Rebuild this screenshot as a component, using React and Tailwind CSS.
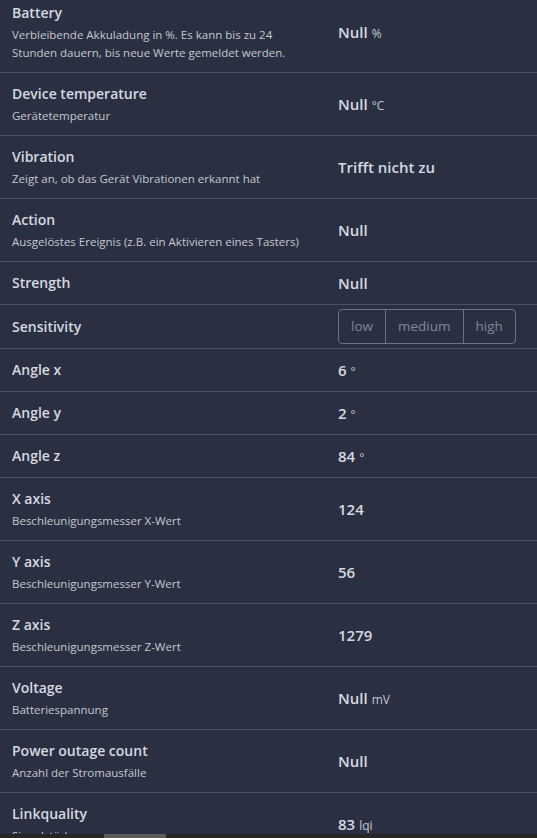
const ROWS = [
  { name: 'Battery', desc: 'Verbleibende Akkuladung in %. Es kann bis zu 24 Stunden dauern, bis neue Werte gemeldet werden.', value: 'Null', unit: '%' },
  { name: 'Device temperature', desc: 'Gerätetemperatur', value: 'Null', unit: '°C' },
  { name: 'Vibration', desc: 'Zeigt an, ob das Gerät Vibrationen erkannt hat', value: 'Trifft nicht zu' },
  { name: 'Action', desc: 'Ausgelöstes Ereignis (z.B. ein Aktivieren eines Tasters)', value: 'Null' },
  { name: 'Strength', value: 'Null' },
  { name: 'Sensitivity', options: ['low', 'medium', 'high'] },
  { name: 'Angle x', value: '6', unit: '°' },
  { name: 'Angle y', value: '2', unit: '°' },
  { name: 'Angle z', value: '84', unit: '°' },
  { name: 'X axis', desc: 'Beschleunigungsmesser X-Wert', value: '124' },
  { name: 'Y axis', desc: 'Beschleunigungsmesser Y-Wert', value: '56' },
  { name: 'Z axis', desc: 'Beschleunigungsmesser Z-Wert', value: '1279' },
  { name: 'Voltage', desc: 'Batteriespannung', value: 'Null', unit: 'mV' },
  { name: 'Power outage count', desc: 'Anzahl der Stromausfälle', value: 'Null' },
  { name: 'Linkquality', desc: 'Signalstärke', value: '83', unit: 'lqi' },
];

function Row({ row }) {
  return (
    <div className="grid grid-cols-[326px_1fr] items-center px-3 py-[10px] border-b border-[#4b5161]">
      <div className="pr-[36px]">
        <div className="text-[14px] leading-[22px] font-semibold text-[#d5d9e0]">{row.name}</div>
        {row.desc && (
          <div className="mt-[2px] text-[11.5px] leading-[18px] text-[#c4c8cf]">{row.desc}</div>
        )}
      </div>
      <div>
        {row.options ? (
          <div className="-my-[6px] flex h-[35px] w-fit rounded-[4px] border border-[#6b7282]">
            {row.options.map((o, i) => (
              <span
                key={o}
                className={`flex items-center px-3 text-[13.5px] text-[#7e8796] ${i > 0 ? 'border-l border-[#6b7282]' : ''}`}
              >
                {o}
              </span>
            ))}
          </div>
        ) : (
          <div className="flex h-[22px] items-baseline gap-1 leading-[22px]">
            <span className="text-[15px] font-semibold text-[#d5d9e0]">{row.value}</span>
            {row.unit && <span className="text-[12px] text-[#c4c8cf]">{row.unit}</span>}
          </div>
        )}
      </div>
    </div>
  );
}

export default function App() {
  return (
    <div className="flex h-[838px] flex-col bg-[#2a3042]" style={{ fontFamily: '"Open Sans", "Noto Sans", sans-serif' }}>
      <div className="flex-1 overflow-hidden">
        <div className="-mt-[8px]">
          {ROWS.map((r) => (
            <Row key={r.name} row={r} />
          ))}
        </div>
      </div>
      {/* horizontal scrollbar */}
      <div className="h-[4px] bg-[#262626]">
        <div className="ml-[104px] h-full w-[62px] bg-[#5c5c5c]" />
      </div>
    </div>
  );
}
